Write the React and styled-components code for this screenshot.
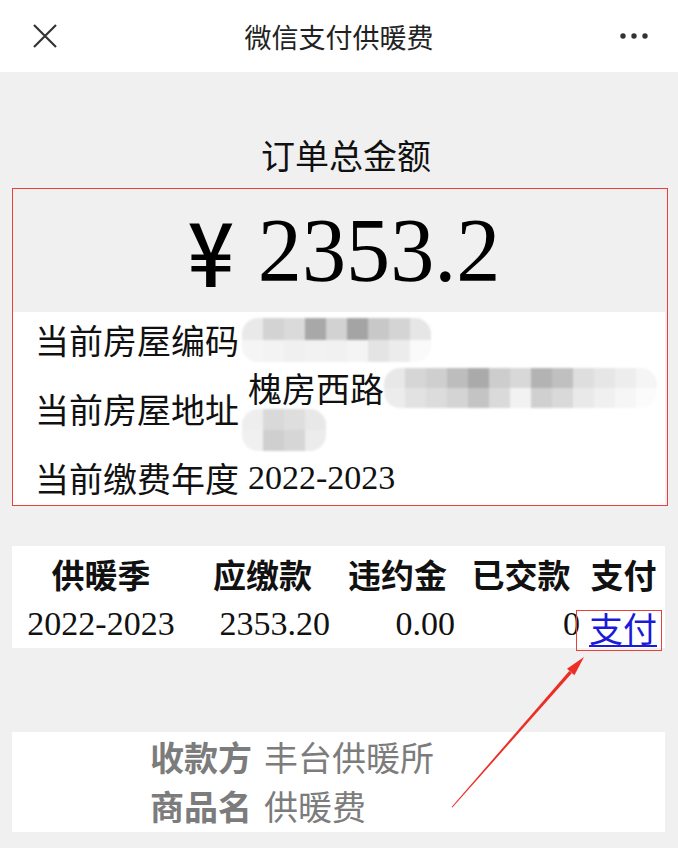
import styled, { createGlobalStyle } from "styled-components";

const GlobalStyle = createGlobalStyle`
  html, body {
    margin: 0;
    background: #f0f0f0;
    font-family: "Noto Sans CJK SC", "Noto Sans", sans-serif;
  }
`;

const Page = styled.div`
  position: relative;
  width: 678px;
  min-height: 848px;
  background: #f0f0f0;
  overflow: hidden;
`;

const TopBar = styled.header`
  height: 72px;
  background: #fff;
  display: grid;
  grid-template-columns: 90px 1fr 90px;
  align-items: center;
`;

const IconButton = styled.div`
  display: flex;
  align-items: center;
  justify-content: ${(p) => (p.$right ? "flex-end" : "flex-start")};
  padding: ${(p) => (p.$right ? "0 30px 0 0" : "0 0 0 32px")};
  color: #333;
`;

const Title = styled.h1`
  margin: 0;
  text-align: center;
  font-size: 27px;
  font-weight: 400;
  color: #222;
`;

const Caption = styled.div`
  padding: 53px 0 0 14px;
  height: 63px;
  text-align: center;
  font-size: 34px;
  line-height: 60px;
  color: #111;
  box-sizing: content-box;
`;

const MarkedBox = styled.section`
  margin: 0 10px 0 12px;
  border: 1.5px solid #e8413c;
`;

const Amount = styled.div`
  height: 123px;
  display: flex;
  align-items: center;
  justify-content: center;
  gap: 20px;
  padding-left: 12px;
  font-family: "Liberation Serif", serif;
  font-size: 91px;
  color: #000;
`;

const Yen = styled.span`
  font-family: "Noto Sans CJK SC", sans-serif;
  font-weight: 500;
  font-size: 82px;
  line-height: 1;
  transform: scaleY(1.08) translateY(-2px);
`;

const Digits = styled.span`
  display: inline-block;
  line-height: 1;
  transform: scaleX(0.97);
`;

const InfoList = styled.div`
  background: #fff;
  margin-right: 2px;
  padding: 0 0 0 22px;
`;

const InfoRow = styled.div`
  display: flex;
  align-items: center;
  min-height: ${(p) => p.$h}px;
`;

const InfoLabel = styled.span`
  flex: none;
  width: 213px;
  font-size: 34px;
  line-height: 42px;
  color: #111;
`;

const InfoValue = styled.div`
  flex: 1;
  display: flex;
  flex-wrap: wrap;
  align-items: center;
  font-size: 34px;
  line-height: 42px;
  color: #111;
`;

const SerifText = styled.span`
  font-family: "Liberation Serif", serif;
  font-size: 34px;
`;

const MosaicFrame = styled.div`
  display: inline-grid;
  grid-template-columns: repeat(${(p) => p.$cols}, ${(p) => p.$cell}px);
  grid-auto-rows: ${(p) => p.$row}px;
  margin-left: ${(p) => p.$ml || 0}px;
  border-radius: 16px;
  overflow: hidden;
  filter: blur(1.3px);
`;

const MosaicCell = styled.span`
  background: ${(p) => p.$c};
`;

const Table = styled.div`
  margin: 40px 13px 0 12px;
  background: #fff;
  display: grid;
  grid-template-columns: 178px 145px 125px 122px 1fr;
`;

const Th = styled.div`
  height: 52px;
  display: flex;
  align-items: center;
  justify-content: center;
  font-size: 33px;
  font-weight: 700;
  color: #111;
  padding-top: 2px;
`;

const Td = styled.div`
  height: 48px;
  display: flex;
  align-items: center;
  justify-content: ${(p) => (p.$align === "right" ? "flex-end" : p.$align === "left" ? "flex-start" : "center")};
  padding-right: ${(p) => p.$pr || 0}px;
  font-family: "Liberation Serif", serif;
  font-size: 34px;
  color: #111;
`;

const PayMark = styled.span`
  display: inline-block;
  margin-left: -6px;
  margin-top: 12px;
  padding: 0 4px 2px 12px;
  border: 1.5px solid #e8413c;
  line-height: 34px;
`;

const PayLink = styled.a`
  font-family: "Noto Sans CJK SC", sans-serif;
  font-size: 34px;
  color: #1a1ad8;
  text-decoration: underline;
  text-decoration-thickness: 2px;
  text-underline-offset: 3px;
`;

const Merchant = styled.section`
  margin: 84px 13px 0 12px;
  height: 100px;
  background: #fff;
  padding-left: 138px;
  color: #7c7c7c;
  font-size: 34px;
  line-height: 49px;
`;

const MerchantLine = styled.div`
  white-space: nowrap;
`;

const MerchantKey = styled.span`
  font-weight: 700;
  margin-right: 12px;
`;

const ArrowLayer = styled.svg`
  position: absolute;
  left: 440px;
  top: 650px;
  pointer-events: none;
`;

function Mosaic({ rows, cell = 21, row = 21, ml }) {
  return (
    <MosaicFrame $cols={rows[0].length} $cell={cell} $row={row} $ml={ml}>
      {rows.flat().map((c, i) => (
        <MosaicCell key={i} $c={c} />
      ))}
    </MosaicFrame>
  );
}

const codeBlur = [
  ["#e9e9e9", "#d3d3d3", "#dadada", "#a8a8a8", "#d2d2d2", "#a4a4a4", "#c8c8c8", "#d4d4d4", "#e6e6e6"],
  ["#f5f5f5", "#f3f3f3", "#f0f0f0", "#f2f2f2", "#f1f1f1", "#f4f4f4", "#e4e4e4", "#ececec", "#fafafa"],
];

const addrBlur = [
  ["#e8e8e8", "#d6d6d6", "#cfcfcf", "#bdbdbd", "#aaaaaa", "#cdcdcd", "#d8d8d8", "#b3b3b3", "#c0c0c0", "#dedede", "#e6e6e6", "#ededed", "#f5f5f5"],
  ["#ececec", "#e2e2e2", "#dcdcdc", "#d4d4d4", "#c4c4c4", "#dadada", "#f2f2f2", "#d0d0d0", "#d9d9d9", "#e9e9e9", "#f0f0f0", "#f6f6f6", "#fbfbfb"],
];

const addrBlur2 = [
  ["#eeeeee", "#d9d9d9", "#dedede", "#e8e8e8"],
  ["#f0f0f0", "#cfcfcf", "#d6d6d6", "#ececec"],
];

export default function App() {
  return (
    <Page>
      <GlobalStyle />
      <TopBar>
        <IconButton>
          <svg width="26" height="26" viewBox="0 0 26 26">
            <path d="M2 2 L24 24 M24 2 L2 24" stroke="#333" strokeWidth="2.2" fill="none" />
          </svg>
        </IconButton>
        <Title>微信支付供暖费</Title>
        <IconButton $right>
          <svg width="28" height="6" viewBox="0 0 28 6">
            <circle cx="3" cy="3" r="2.7" fill="#333" />
            <circle cx="14" cy="3" r="2.7" fill="#333" />
            <circle cx="25" cy="3" r="2.7" fill="#333" />
          </svg>
        </IconButton>
      </TopBar>

      <Caption>订单总金额</Caption>

      <MarkedBox>
        <Amount>
          <Yen>¥</Yen>
          <Digits>2353.2</Digits>
        </Amount>
        <InfoList>
          <InfoRow $h={55}>
            <InfoLabel>当前房屋编码</InfoLabel>
            <InfoValue>
              <Mosaic rows={codeBlur} row={22} ml={-6} />
            </InfoValue>
          </InfoRow>
          <InfoRow $h={84}>
            <InfoLabel>当前房屋地址</InfoLabel>
            <InfoValue>
              <span>槐房西路</span>
              <Mosaic rows={addrBlur} row={20} />
              <Mosaic rows={addrBlur2} row={21} ml={-6} />
            </InfoValue>
          </InfoRow>
          <InfoRow $h={54}>
            <InfoLabel>当前缴费年度</InfoLabel>
            <InfoValue>
              <SerifText>2022-2023</SerifText>
            </InfoValue>
          </InfoRow>
        </InfoList>
      </MarkedBox>

      <Table>
        <Th>供暖季</Th>
        <Th>应缴款</Th>
        <Th>违约金</Th>
        <Th>已交款</Th>
        <Th>支付</Th>
        <Td>2022-2023</Td>
        <Td $align="right" $pr={5}>2353.20</Td>
        <Td $align="right" $pr={5}>0.00</Td>
        <Td $align="right" $pr={2}>0</Td>
        <Td $align="left">
          <PayMark>
            <PayLink href="#pay">支付</PayLink>
          </PayMark>
        </Td>
      </Table>

      <Merchant>
        <MerchantLine>
          <MerchantKey>收款方</MerchantKey>丰台供暖所
        </MerchantLine>
        <MerchantLine>
          <MerchantKey>商品名</MerchantKey>供暖费
        </MerchantLine>
      </Merchant>

      <ArrowLayer width="160" height="170" viewBox="0 0 160 170">
        <polygon points="11.6,157 12.4,157.6 131.8,23.2 129.2,21" fill="#ec2f26" />
        <polygon points="144,7 127,18.7 134.4,25.3" fill="#ec2f26" />
      </ArrowLayer>
    </Page>
  );
}
